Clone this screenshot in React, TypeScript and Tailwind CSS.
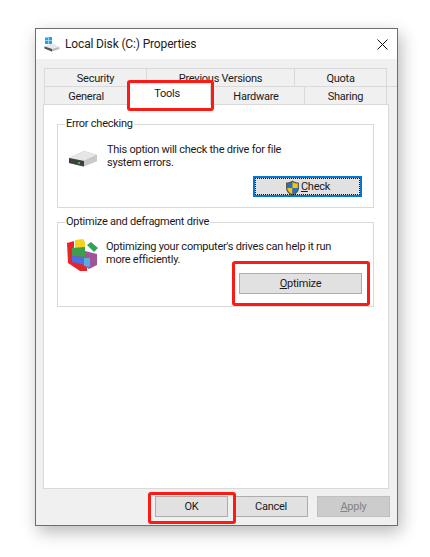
import React from 'react';

const WindowsDriveIcon = () => (
  <svg width="16" height="16" viewBox="0 0 16 16" className="shrink-0">
    <rect x="1" y="1.5" width="3" height="3" fill="#1fa5e6" />
    <rect x="4.5" y="1" width="3.5" height="3.5" fill="#1fa5e6" />
    <rect x="1" y="5" width="3" height="3" fill="#1fa5e6" />
    <rect x="4.5" y="5" width="3.5" height="3" fill="#1fa5e6" />
    <path d="M0.5 10.5 L8 8 L15.5 11 L15.5 13 L8 15.5 L0.5 12.5 Z" fill="#b9bcbd" />
    <path d="M0.5 10.5 L8 13 L15.5 11 L8 8 Z" fill="#e8e9e9" />
    <path d="M0.5 10.5 L8 13 L8 15.5 L0.5 12.5 Z" fill="#4f5254" />
  </svg>
);

const DriveIcon = () => (
  <svg width="30" height="17" viewBox="0 0 30 17" className="shrink-0">
    <path d="M1 8 L16 1 L29 5 L29 11 L15 16.5 L1 13 Z" fill="#a9a9a9" />
    <path d="M1 8 L16 1 L29 5 L16 11 Z" fill="#e6e6e6" />
    <path d="M1 8 L16 11 L16 16.5 L1 13 Z" fill="#3f3f3f" />
    <path d="M16 11 L29 5 L29 11 L16 16.5 Z" fill="#c9c9c9" />
    <rect x="10" y="12" width="2" height="2" fill="#39b54a" />
  </svg>
);

const DefragIcon = () => (
  <svg width="33" height="32" viewBox="0 0 33 32" className="shrink-0">
    <path d="M0 4 L7 2 L7 20 L20 27 L20 32 L13 32 L1 24 Z" fill="#e3262a" />
    <path d="M7 20 L20 27 L28 24 L28 16 L7 14 Z" fill="#c6392d" />
    <path d="M18 12 L30 15 L30 26 L22 30 L18 27 Z" fill="#a0559b" />
    <path d="M8 1 L16 0 L18 3 L18 12 L8 12 Z" fill="#f4d21f" />
    <path d="M5 9 L18 8 L18 18 L5 17 Z" fill="#3f9e4a" />
    <path d="M5 17 L18 18 L18 26 L5 23 Z" fill="#4b6ee8" />
    <path d="M17 19 L23 19 L23 28 L17 27 Z" fill="#5cabd8" />
    <path d="M20 6 L24 3 L31 9 L27 13 Z" fill="#2fa35a" />
  </svg>
);

const ShieldIcon = () => (
  <svg width="15" height="16" viewBox="0 0 15 16" className="shrink-0">
    <path d="M7.5 0.5 C5.5 2 3 2.5 1 2.5 L1 8 C1 11.5 4 14.5 7.5 15.5 C11 14.5 14 11.5 14 8 L14 2.5 C12 2.5 9.5 2 7.5 0.5 Z" fill="#5a5a4a" />
    <path d="M7.5 2 L7.5 8 L2.2 8 L2.2 3.6 C4 3.5 6 3 7.5 2 Z" fill="#1c74c9" />
    <path d="M7.5 2 C9 3 11 3.5 12.8 3.6 L12.8 8 L7.5 8 Z" fill="#f5c21a" />
    <path d="M2.2 8 L7.5 8 L7.5 14.2 C4.8 13.3 2.5 11 2.2 8 Z" fill="#f5c21a" />
    <path d="M7.5 8 L12.8 8 C12.5 11 10.2 13.3 7.5 14.2 Z" fill="#1c74c9" />
  </svg>
);

export default function App() {
  return (
    <div className="w-[430px] h-[557px] bg-white pl-[35px] pt-[28px] overflow-hidden font-['Roboto',sans-serif] text-[11px] tracking-[-0.25px] text-[#1a1a1a]">
      <div className="relative w-[363px] h-[498px] border border-[#6e6e6e] bg-[#f0f0f0] shadow-[3px_6px_16px_rgba(0,0,0,0.28)]">
        <div className="flex items-center h-[30px] bg-white pl-[8px] pr-[9px]">
          <WindowsDriveIcon />
          <span className="ml-[5px] text-[12px] tracking-[-0.15px] text-[#222]">Local Disk (C:) Properties</span>
          <svg width="11" height="11" viewBox="0 0 11 11" className="ml-auto">
            <path d="M0.5 0.5 L10.5 10.5 M10.5 0.5 L0.5 10.5" stroke="#111" strokeWidth="1" fill="none" />
          </svg>
        </div>

        <div className="pl-[8px] pt-[9px]">
          <div className="flex h-[18px]">
            <div className="w-[102px] pt-[3px] border-l border-t border-[#d9d9d9] flex items-center justify-center">Security</div>
            <div className="w-[148px] pt-[3px] border-l border-t border-[#d9d9d9] flex items-center justify-center">Previous Versions</div>
            <div className="w-[93px] pt-[3px] border-x border-t border-[#d9d9d9] flex items-center justify-center">Quota</div>
          </div>
          <div className="flex h-[18px] border-t border-[#d9d9d9]">
            <div className="w-[83px] pt-[3px] border-l border-[#d9d9d9] flex items-center justify-center">General</div>
            <div className="relative z-10 w-[83px] h-[22px] -mt-[3px] bg-white flex items-center justify-center pb-[1px] pr-[3px]">Tools</div>
            <div className="w-[94px] pt-[3px] border-l border-[#d9d9d9] flex items-center justify-center pr-[3px]">Hardware</div>
            <div className="w-[83px] pt-[3px] border-x border-[#d9d9d9] flex items-center justify-center">Sharing</div>
          </div>
        </div>

        <div className="ml-[7px] w-[346px] h-[385px] border border-[#d9d9d9] bg-white pl-[13px] pt-[11px]">
          <fieldset className="w-[317px] h-[92px] border border-[#d9d9d9] pl-[7px] m-0">
            <legend className="px-[1px] leading-[16px]">Error checking</legend>
            <div className="flex h-[41px] pt-[11px]">
              <div className="pl-[3px] pt-[7px]">
                <DriveIcon />
              </div>
              <div className="ml-[9px] w-[190px] leading-[13px]">
                This option will check the drive for file system errors.
              </div>
            </div>
            <div className="flex justify-end pr-[11px] mt-[3px]">
              <button className="w-[109px] h-[21px] pt-[2px] border-2 border-[#0078d7] bg-[#e1e1e1] flex items-center justify-center outline-1 outline-dotted outline-[#111] -outline-offset-3">
                <ShieldIcon />
                <span className="ml-[1px]"><span className="underline">C</span>heck</span>
              </button>
            </div>
          </fieldset>

          <fieldset className="mt-[6px] w-[317px] h-[93px] border border-[#d9d9d9] pl-[7px] m-0">
            <legend className="px-[1px] leading-[16px]">Optimize and defragment drive</legend>
            <div className="flex h-[42px] pt-[9px]">
              <div className="pl-[2px]">
                <DefragIcon />
              </div>
              <div className="ml-[6px] w-[232px] leading-[13px] pt-[1px]">
                Optimizing your computer's drives can help it run more efficiently.
              </div>
            </div>
            <div className="flex justify-end pr-[11px] mt-[1px]">
              <button className="w-[123px] h-[21px] pt-[2px] border border-[#adadad] bg-[#e1e1e1]">
                <span className="underline">O</span>ptimize
              </button>
            </div>
          </fieldset>
        </div>

        <div className="flex justify-end pt-[7px] pr-[7px]">
          <button className="w-[73px] h-[21px] pt-[2px] border border-[#adadad] bg-[#e1e1e1]">OK</button>
          <button className="ml-[6px] w-[74px] h-[21px] pt-[2px] border border-[#adadad] bg-[#e1e1e1]">Cancel</button>
          <button className="ml-[9px] w-[73px] h-[21px] pt-[2px] border border-[#bfbfbf] bg-[#cccccc] text-[#838383]">
            <span className="underline">A</span>pply
          </button>
        </div>

        {/* red highlights drawn over the dialog */}
        <div className="absolute z-20 left-[91px] top-[51px] w-[87px] h-[31px] border-[3px] border-[#fb1a14] rounded-[3px]" />
        <div className="absolute z-20 left-[196px] top-[232px] w-[138px] h-[45px] border-[3px] border-[#fb1a14] rounded-[3px]" />
        <div className="absolute z-20 left-[112px] top-[463px] w-[88px] h-[32px] border-[3px] border-[#fb1a14] rounded-[3px]" />
      </div>
    </div>
  );
}
